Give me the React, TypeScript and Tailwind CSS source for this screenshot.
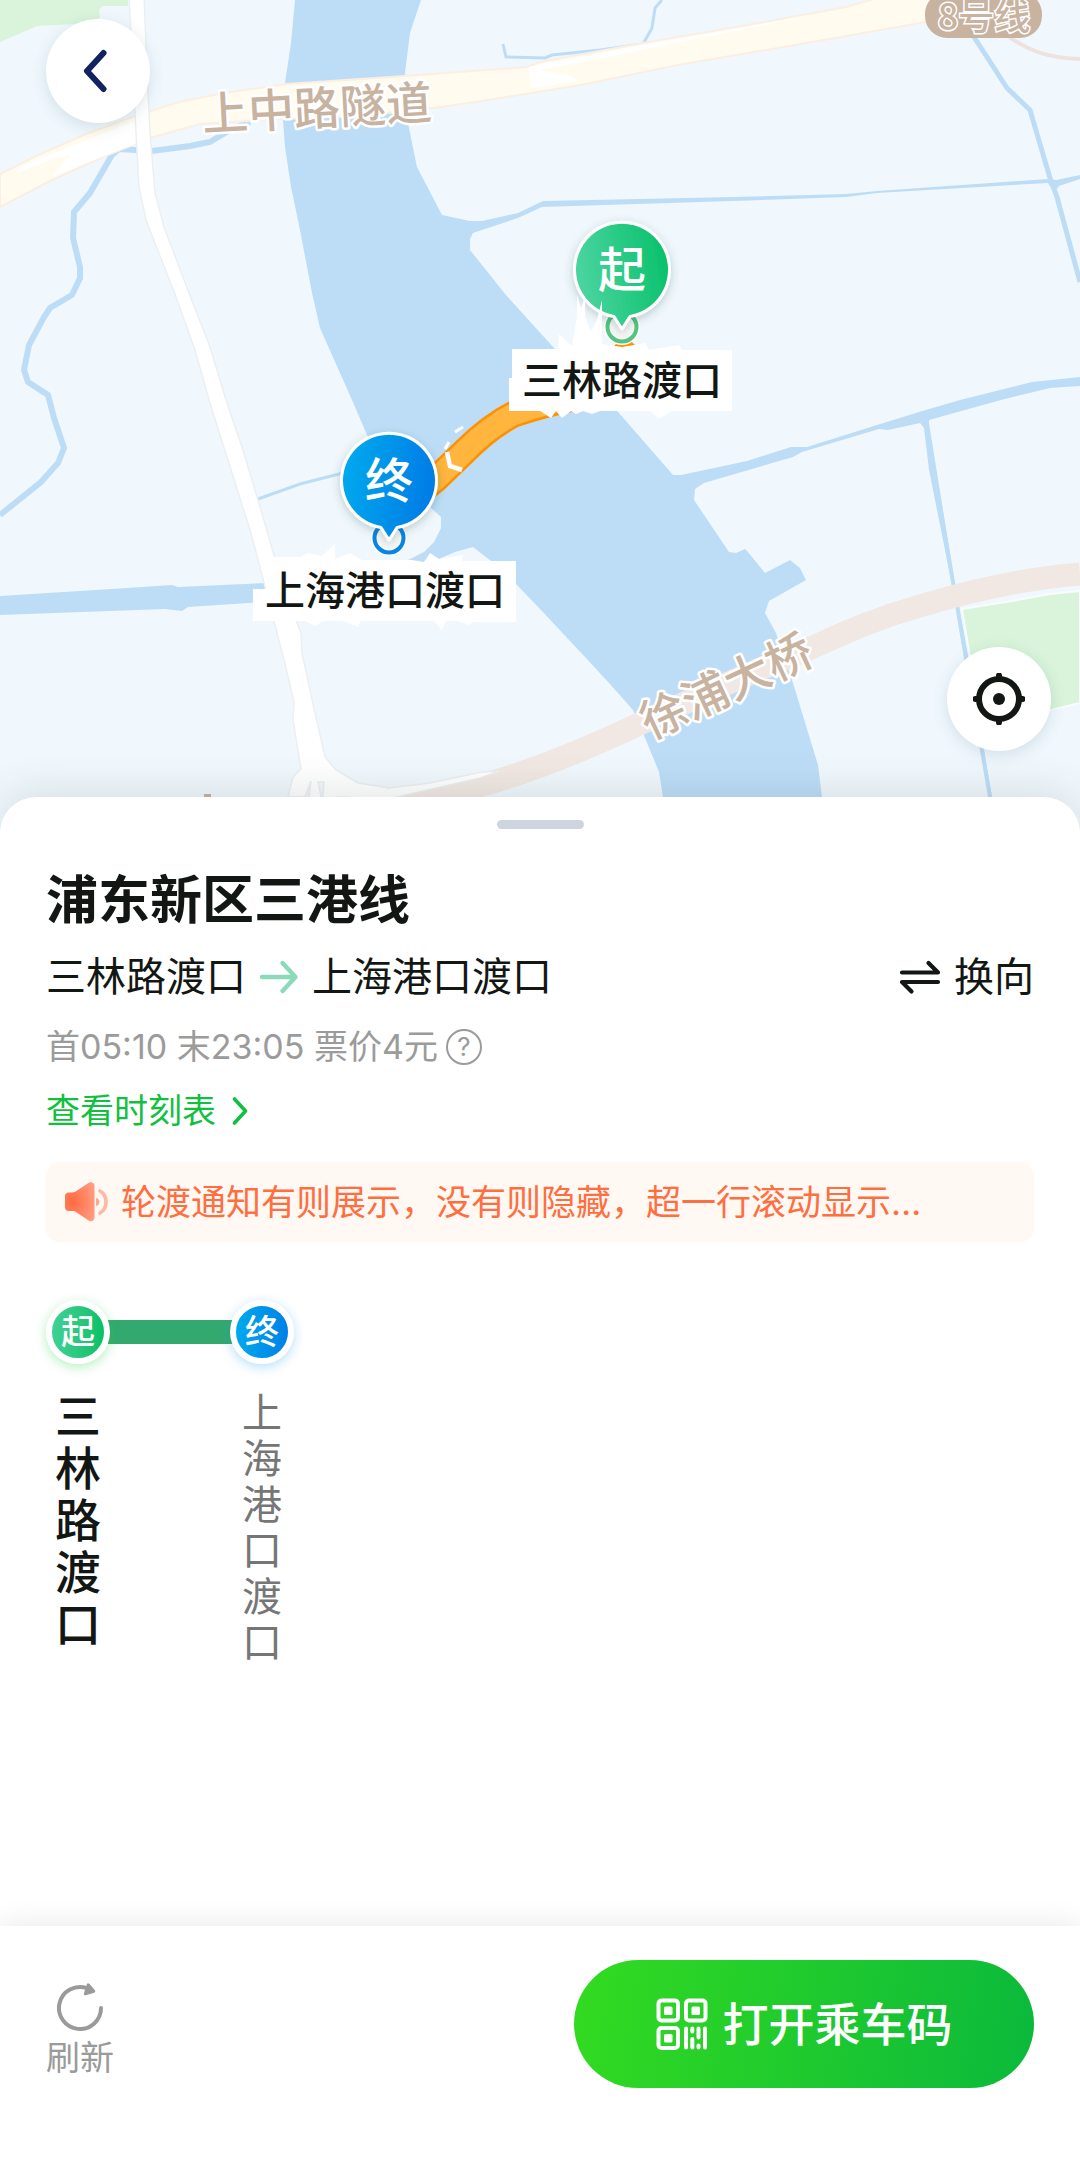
import React from 'react';

function BackIcon() {
  return (
    <svg viewBox="0 0 24 44" className="h-11 w-6" fill="none" stroke="#14225f" strokeWidth="6" strokeLinecap="round" strokeLinejoin="round" aria-hidden="true">
      <path d="M20.500 4L4 22L20.500 40" />
    </svg>
  );
}

function LocateIcon() {
  return (
    <svg viewBox="0 0 52 52" className="size-[52px]" fill="none" stroke="#121714" aria-hidden="true">
      <circle cx="26" cy="26" r="20" strokeWidth="6" />
      <circle cx="26" cy="26" r="6" fill="#121714" stroke="none" />
      <path d="M26 2.500V6M26 46v3.500M2.500 26H6M46 26h3.500" strokeWidth="6" strokeLinecap="round" />
    </svg>
  );
}

function RightArrowIcon() {
  return (
    <svg viewBox="0 0 40 36" className="h-9 w-10" fill="none" stroke="#8bdbbb" strokeWidth="4.400" strokeLinecap="round" strokeLinejoin="round" aria-hidden="true">
      <path d="M3 18H36M23.500 4L36.500 18L23.500 32" />
    </svg>
  );
}

function SwapIcon() {
  return (
    <svg viewBox="0 0 42 36" className="h-9 w-[42px]" fill="none" stroke="#121714" strokeWidth="4.200" strokeLinecap="round" strokeLinejoin="round" aria-hidden="true">
      <path d="M3 13.500H39L29.500 4M39 23H3L12.500 32.500" />
    </svg>
  );
}

function SpeakerIcon() {
  return (
    <svg viewBox="0 0 46 46" className="size-[46px]" aria-hidden="true">
      <defs>
        <radialGradient id="speaker" cx="0.25" cy="0.5" r="0.8">
          <stop offset="0" stopColor="#ff6a40" />
          <stop offset="1" stopColor="#ff9c80" />
        </radialGradient>
      </defs>
      <path d="M5.500 13.500H9.500C11 13.500 12 13 13 12.300L25.500 4C28 2.500 31.500 3.500 31.500 7V38.500C31.500 42 28 43 25.500 41.500L13 33C12 32.300 11 32 9.500 32H5.500C3.500 32 2 30.500 2 28.500V17C2 15 3.500 13.500 5.500 13.500Z" fill="url(#speaker)" />
      <path d="M37 12C45 16.500 45 29.500 37 34" fill="none" stroke="#ffb9a3" strokeWidth="3.600" strokeLinecap="round" />
      <path d="M33 19C37.500 19.500 37.500 26.500 33 27Z" fill="#ffa78c" />
    </svg>
  );
}

function RefreshIcon() {
  return (
    <svg viewBox="0 0 48 50" className="h-[50px] w-12" fill="none" stroke="#9a9a9a" strokeWidth="4" strokeLinecap="round" strokeLinejoin="round" aria-hidden="true">
      <path d="M45 27A21 21 0 1 1 31 7.200" />
      <path d="M32.300 3.800L37.800 10.200L29.300 12.900Z" fill="#9a9a9a" strokeWidth="3" />
    </svg>
  );
}

function QrIcon() {
  return (
    <svg viewBox="0 0 52 52" className="size-[52px]" fill="none" stroke="#fff" strokeWidth="4" aria-hidden="true">
      <rect x="2.500" y="2.500" width="19.500" height="20" rx="3" />
      <rect x="30" y="2.500" width="19.500" height="20" rx="3" />
      <rect x="2.500" y="30" width="19.500" height="20" rx="3" />
      <g fill="#fff" stroke="none">
        <rect x="8" y="8.500" width="8.500" height="8.500" rx="1.500" />
        <rect x="35.500" y="8.500" width="8.500" height="8.500" rx="1.500" />
        <rect x="8" y="36" width="8.500" height="8.500" rx="1.500" />
      </g>
      <path d="M30 30.500V49.500M36.300 30.500V33.500M36.300 41V49.500M42.500 30.500V39.500M42.500 47.500V49.500M49 30.500V49.500" strokeLinecap="round" />
    </svg>
  );
}

type PinProps = { x: number; y: number; char: string; fill: string; ring: string };

function Pin({ x, y, char, fill, ring }: PinProps) {
  return (
    <g transform={`translate(${x} ${y})`}>
      <circle cy="58" r="18" fill="#fff" />
      <circle cy="58" r="14.500" fill="#f8f8f7" stroke={ring} strokeWidth="4" />
      <g filter="url(#pinShadow)">
        <path d="M0 60L-8 47.500A47.500 47.500 0 1 1 8 47.500Z" fill={fill} stroke="#fff" strokeWidth="3" strokeLinejoin="round" />
      </g>
      <text y="18" fontSize="48" fontWeight="500" fill="#fff" textAnchor="middle">{char}</text>
    </g>
  );
}

const WATER = '#bdddf7';

function MapCanvas() {
  return (
    <svg viewBox="0 0 1080 833" preserveAspectRatio="xMidYMin slice" className="absolute inset-0 size-full" role="img" aria-label="轮渡线路地图">
      <defs>
        <linearGradient id="startFill" x1="0" x2="1" y1="0.2" y2="0">
          <stop offset="0" stopColor="#49d49f" />
          <stop offset="1" stopColor="#04bf66" />
        </linearGradient>
        <linearGradient id="endFill" x1="0" x2="1" y1="0" y2="0.2">
          <stop offset="0" stopColor="#00adee" />
          <stop offset="1" stopColor="#017de6" />
        </linearGradient>
        <filter id="pinShadow" x="-30%" y="-30%" width="160%" height="160%">
          <feDropShadow dx="0" dy="3" stdDeviation="5" floodColor="#1d4a40" floodOpacity="0.25" />
        </filter>
      </defs>
      <rect width="1080" height="833" fill="#f0f8fd" />

      <path d="M0 0H128V6H103L99 10L100 17L92 23L37 26L0 42Z" fill="#d9f4da" />
      <path d="M962 609L1012 601L1050 594L1080 591V703L1051 710L980 730L970 657Z" fill="#d9f4da" stroke="#f8fcfd" strokeWidth="2" />

      <g fill={WATER}>
        <path d="M295 0L291 43L285 83L283 120L285 147L291 187L300 230L312 293L320 328L352 400L367 435L400 480L430 507L441 517V528L434 542L424 552L406 561L425 565L455 552L473 547L491 561L517 585L540 609L585 657L609 683L633 710L643 733L659 772L663 797L666 833H826L822 797L818 765L793 683L776 633L765 613L769 601L806 580L800 568L790 560L765 573L748 552L745 549L736 553L729 552L694 500L695 489L704 483L793 457L802 452L879 429L888 430L920 423L924 428L929 470L952 585L964 657L989 797H992L967 650L955 585L929 423V420L1001 400L1050 388L1080 386V377L1032 382L960 400L919 412L877 425L807 447H791L747 461L681 475H673L619 413L554 348L506 295L470 250V239L473 233L482 230L518 218L542 207L733 201L846 197L877 193L1048 183L1054 193L1059 186L1080 179V175L1056 180L1048 179L877 191L846 194L733 197L543 201L518 213L482 221H470L442 215L417 167L408 123L405 73L410 33L421 0Z" />
        <path d="M0 596L127 588L172 585L178 587L265 583V602L188 607L182 611L165 609L0 615Z" />
      </g>
      <g fill="none" stroke={WATER}>
        <path d="M250 122L230 130L210 142L190 146L152 151L119 149L112 155L90 193L74 212L73 238L80 267V278L72 295L50 308L44 317L29 345L24 370L28 382L48 395L54 418L64 448L58 463L41 482L0 515" strokeWidth="6" />
        <path d="M258 499L300 484L339 474L370 462" strokeWidth="3" />
        <path d="M974 37L1007 88L1030 110L1050 178L1057 197L1080 282" strokeWidth="5" />
        <path d="M503 44L506 57L545 58L552 55L600 50L643 44L652 28L655 8L662 0" strokeWidth="3" />
        <path d="M926 423L954 588L990 797" strokeWidth="4" />
      </g>

      <g fill="none">
        <path d="M1008 36C1030 52 1050 58 1080 59" stroke="#efe1de" strokeWidth="4" />
        <path d="M300 833C340 815 420 800 482 785C530 772 590 747 633 727C700 696 750 672 809 649C850 630 880 617 920 606C980 588 1030 578 1080 574" stroke="#f1e8e3" strokeWidth="23" />
      </g>

      <path d="M0 174L34 157L86 134L138 115L179 102L224 93L286 84L405 76L527 67L540 62L643 43L747 25L846 7L884 -4H1060L1010 5L926 22L795 45L678 65L581 85L482 101L434 108L360 116L282 119L200 124L150 138L103 157L52 180L0 207Z" fill="#fffbee" stroke="#fbeee4" strokeWidth="2" />
      <path d="M14 171L34 161L92 138L140 119V142L104 156L52 177L60 167L70 155L52 159L20 172Z" fill="#fff" />
      <path d="M528 67L643 45L747 27L820 14L617 55L540 70L570 76L578 81L532 88Z" fill="#fff" />
      <path d="M129 -4H144L147 70L150 133L155 193L164 227L189 293L210 347L226 400L243 450L258 500L274 555L292 610L301 633L302 653L315 713L325 757L336 770L358 783L389 788L430 783L482 772L500 771L480 778L389 799L336 797L330 833H320L324 782H318L329 833H300L309 797L311 781L305 797H288L293 777L301 769L293 720L294 702L284 660L277 633L262 575L251 533L243 508L209 400L195 350L176 297L146 220L139 187L136 133Z" fill="#fff" stroke="#eceff1" strokeWidth="1.500" />

      <path d="M410 500L436 479L465 451Q490 426 514 414Q540 405 590 394L634 344" fill="none" stroke="#ff9100" strokeWidth="27" strokeLinejoin="round" />
      <path d="M410 500L436 479L465 451Q490 426 514 414Q540 405 590 392" fill="none" stroke="#ffb53e" strokeWidth="22" />
      <path d="M447 452L450 466L462 470" fill="none" stroke="#fff" strokeWidth="4.500" />
      <path d="M455 432L463 427M445 449L449 442" stroke="#fff" strokeWidth="3" />

      <g fontFamily="'Noto Sans CJK SC', sans-serif">
        <rect x="925" y="-8" width="117" height="46" rx="22" fill="#c8b3a1" />
        <text x="984" y="30" fontSize="36" fontWeight="500" textAnchor="middle" fill="#c8b3a1" stroke="#fff" strokeWidth="3" paintOrder="stroke">8号线</text>

        <g fontSize="46" fontWeight="500" fill="#c8b2a0" stroke="#fff" strokeWidth="5" strokeLinejoin="round" paintOrder="stroke">
          <text x="203" y="131" transform="rotate(-3 203 131)">上中路隧道</text>
          <text x="650" y="740" transform="rotate(-25 650 740)">徐浦大桥</text>
        </g>
        <path d="M204 794H211V797H204Z" fill="#c8b2a0" />

        <Pin x={622} y={269} char="起" fill="url(#startFill)" ring="#55c482" />
        <Pin x={389} y={480} char="终" fill="url(#endFill)" ring="#0786e6" />

        <path d="M512 349H558L559 334L572 346L577 316V295L581 309L585 296V317L591 332L597 320L602 300V344L622 347L645 343L649 350L679 345L682 350H732V411H680L672 411L659 419L650 411H600L592 414L583 411L576 414L571 411L562 418L556 411L551 418L540 411H509V378H512Z" fill="#fff" />
        <path d="M272 557H300L308 553L322 556L335 544V559L350 553L362 560H412L424 562L430 553L439 559L463 555L462 561H516V622H472L469 625L458 621H446L442 630L434 621H361L358 627L343 621H322L316 626L305 621H253V589H266Z" fill="#fff" />
        <g fontSize="40" fontWeight="500" fill="#121714">
          <text x="522" y="395">三林路渡口</text>
          <text x="265" y="605">上海港口渡口</text>
        </g>
      </g>
    </svg>
  );
}

type StopProps = { char: string; name: string; current?: boolean };

function Stop({ char, name, current = false }: StopProps) {
  return (
    <li className="flex w-16 flex-col items-center gap-[26px]">
      <span
        className={
          current
            ? 'z-10 flex size-16 items-center justify-center rounded-full border-[6px] border-white bg-linear-to-r from-[#3fd096] to-[#04c066] text-[34px] leading-none font-medium text-white shadow-[0_3px_12px_rgba(40,210,70,0.35)]'
            : 'z-10 flex size-16 items-center justify-center rounded-full border-[6px] border-white bg-linear-to-r from-[#00a9ee] to-[#0180e6] text-[34px] leading-none font-medium text-white shadow-[0_3px_12px_rgba(0,150,235,0.3)]'
        }
      >
        {char}
      </span>
      <span
        className={
          current
            ? 'w-[46px] text-[46px] leading-[52px] font-medium break-all text-[#121714]'
            : 'w-10 text-[40px] leading-[46px] break-all text-[#767676]'
        }
      >
        {name}
      </span>
    </li>
  );
}

export default function App() {
  return (
    <div className="flex min-h-screen flex-col bg-white font-['Inter','Noto_Sans_CJK_SC',sans-serif] text-[#121714]">
      <header className="relative h-[833px] overflow-hidden">
        <MapCanvas />
        <button type="button" aria-label="返回" className="absolute top-[19px] left-[46px] flex size-[104px] items-center justify-center rounded-full bg-white pr-1.5 shadow-[0_4px_16px_rgba(30,70,90,0.14)]">
          <BackIcon />
        </button>
        <button type="button" aria-label="定位" className="absolute right-[29px] bottom-[82px] flex size-[104px] items-center justify-center rounded-full bg-white shadow-[0_4px_16px_rgba(30,70,90,0.14)]">
          <LocateIcon />
        </button>
      </header>

      <main className="relative -mt-9 flex flex-1 flex-col rounded-t-[36px] bg-white px-[46px] pt-[23px] shadow-[0_-6px_40px_rgba(60,70,70,0.14)]">
        <div className="h-[9px] w-[87px] self-center rounded-full bg-[#cfd5de]" />
        <h1 className="mt-[38px] text-[52px] leading-[68px] font-semibold">浦东新区三港线</h1>

        <div className="mt-3 flex items-center justify-between text-[40px] leading-[60px]">
          <p className="flex items-center gap-[13px]">
            三林路渡口
            <RightArrowIcon />
            上海港口渡口
          </p>
          <button type="button" className="flex items-center gap-[13px]">
            <SwapIcon />
            换向
          </button>
        </div>

        <p className="mt-3.5 flex items-center gap-2 text-[34px] leading-[52px] text-[#9b9b9b]">
          首05:10 末23:05 票价4元
          <button type="button" aria-label="票价说明" className="flex size-9 items-center justify-center rounded-full border-2 border-[#9b9b9b] text-[26px] leading-none">
            ?
          </button>
        </p>

        <a href="#timetable" className="mt-3 flex items-center gap-4 self-start text-[34px] leading-[52px] text-[#11c040]">
          查看时刻表
          <svg viewBox="0 0 16 30" className="h-[30px] w-4" fill="none" stroke="#11c040" strokeWidth="3.600" strokeLinecap="round" strokeLinejoin="round" aria-hidden="true">
            <path d="M2.500 3L13.500 15L2.500 27" />
          </svg>
        </a>

        <div role="status" className="mt-[25px] flex h-20 items-center gap-3 rounded-[14px] bg-[#fff8f3] px-[17px] text-[35px] text-[#ff6e3f]">
          <SpeakerIcon />
          <p className="truncate">轮渡通知有则展示，没有则隐藏，超一行滚动显示…</p>
        </div>

        <ol className="mt-[58px] flex pb-60">
          <Stop char="起" name="三林路渡口" current />
          <li aria-hidden="true" className="-mx-1 mt-5 h-6 w-32 bg-[#33a96f]" />
          <Stop char="终" name="上海港口渡口" />
        </ol>
      </main>

      <footer className="relative flex items-start justify-between bg-white px-[46px] pt-[34px] pb-[72px] shadow-[0_-4px_26px_rgba(0,0,0,0.08)]">
        <button type="button" className="flex flex-col items-center gap-0.5 pt-[21px] text-[34px] leading-[50px] text-[#9a9a9a]">
          <RefreshIcon />
          刷新
        </button>
        <button type="button" className="flex h-32 w-[460px] items-center justify-center gap-[15px] rounded-full bg-[linear-gradient(100deg,#33db20,#0bb93c)] text-[46px] font-medium text-white">
          <QrIcon />
          打开乘车码
        </button>
      </footer>
    </div>
  );
}
